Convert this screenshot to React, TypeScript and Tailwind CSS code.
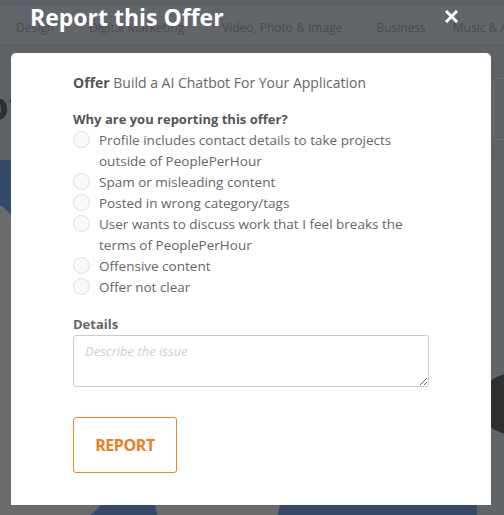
const navItems = [
  { label: "Design", cls: "ml-[16px]" },
  { label: "Digital Marketing", cls: "ml-[35px]" },
  { label: "Video, Photo & Image", cls: "ml-[38px]" },
  { label: "Business", cls: "ml-[34px]" },
  { label: "Music & Audio", cls: "ml-[27px]" },
];

const reasons = [
  "Profile includes contact details to take projects outside of PeoplePerHour",
  "Spam or misleading content",
  "Posted in wrong category/tags",
  "User wants to discuss work that I feel breaks the terms of PeoplePerHour",
  "Offensive content",
  "Offer not clear",
];

function Backdrop() {
  // the page behind the modal, already dimmed by the overlay
  return (
    <div className="flex flex-col w-full h-full bg-[#5e6166]">
      <div className="h-[7px] bg-[#5c5f64]" />
      <nav className="flex items-center h-[38px] bg-[#62656a] border-b border-[#595c61] text-[12px] text-[#4a4c51] whitespace-nowrap pt-[4px]">
        {navItems.map((n) => (
          <span key={n.label} className={`shrink-0 ${n.cls}`}>
            {n.label}
          </span>
        ))}
      </nav>
      <div className="flex items-start justify-between h-[115px] overflow-hidden">
        <span className="ml-[-16px] mt-[40px] text-[40px] font-bold text-[#2c2e31] leading-none">ot</span>
        <div className="mt-[33px] mr-[-29px] w-[40px] h-[62px] border border-[#6b6e73] rounded" />
      </div>
      <div className="flex flex-1">
        <div className="relative w-[477px] bg-[#354a68] overflow-hidden">
          <div className="absolute left-[-60px] top-[40px] w-[80px] h-[200px] rounded-full bg-[#6a6b6d]" />
          <div className="absolute left-[-30px] top-[150px] w-[150px] h-[220px] rounded-full bg-[#6a6b6d]" />
          <div className="absolute left-[155px] top-[290px] w-[125px] h-[100px] rounded-full bg-[#6a6b6d]" />
        </div>
        <div className="flex-1 flex flex-col bg-[#606368] pt-[203px] pl-[3px] overflow-hidden">
          <span className="text-[14px] text-[#4a4c51] leading-[21px]">VI</span>
          <div className="mt-[-10px] w-[60px] h-[60px] shrink-0 rounded-full bg-[#2e2f31]" />
        </div>
      </div>
    </div>
  );
}

export default function App() {
  return (
    <div
      className="relative w-[504px] h-[515px] overflow-hidden"
      style={{ fontFamily: '"Open Sans", "Noto Sans", sans-serif' }}
    >
      <Backdrop />

      {/* modal overlay */}
      <div className="absolute inset-0 flex flex-col pl-[11px] pr-[13px] pb-[10px]">
        <div className="flex items-center justify-between h-[53px] pl-[19px] pr-[33px] pb-[20px]">
          <h1 className="text-[23px] font-bold text-white leading-[30px]">Report this Offer</h1>
          <button className="w-[13px] h-[13px]">
            <svg viewBox="0 0 13 13" className="w-[13px] h-[13px]">
              <path d="M2 2 L11 11 M11 2 L2 11" stroke="#fff" strokeWidth="3" strokeLinecap="square" />
            </svg>
          </button>
        </div>

        <div className="flex-1 bg-white rounded-t-[5px] px-[62px] pt-[19px] text-[13.5px] leading-[21px] text-[#666]">
          <p className="text-[14px]">
            <span className="font-bold text-[#555]">Offer</span> Build a AI Chatbot For Your Application
          </p>

          <p className="mt-[16px] text-[13px] font-bold text-[#555]">Why are you reporting this offer?</p>
          <div className="flex flex-col">
            {reasons.map((r) => (
              <label key={r} className="flex items-start gap-[9px]">
                <span className="mt-[1px] w-[17px] h-[17px] shrink-0 rounded-full border border-[#dcdee2] bg-[#f8f9fb]" />
                <span className="w-[320px]">{r}</span>
              </label>
            ))}
          </div>

          <p className="mt-[16px] text-[13px] font-bold text-[#666]">Details</p>
          <textarea
            placeholder="Describe the issue"
            className="block w-[356px] h-[52px] px-[11px] py-[5px] border border-[#cbcbcb] rounded-[3px] text-[13px] placeholder:italic placeholder:text-[#cfcfcf]"
          />

          <button className="mt-[30px] w-[104px] h-[56px] border border-[#e8872a] rounded-[3px] text-[16px] font-bold text-[#ee7d1d] tracking-tight">
            REPORT
          </button>
        </div>
      </div>
    </div>
  );
}
